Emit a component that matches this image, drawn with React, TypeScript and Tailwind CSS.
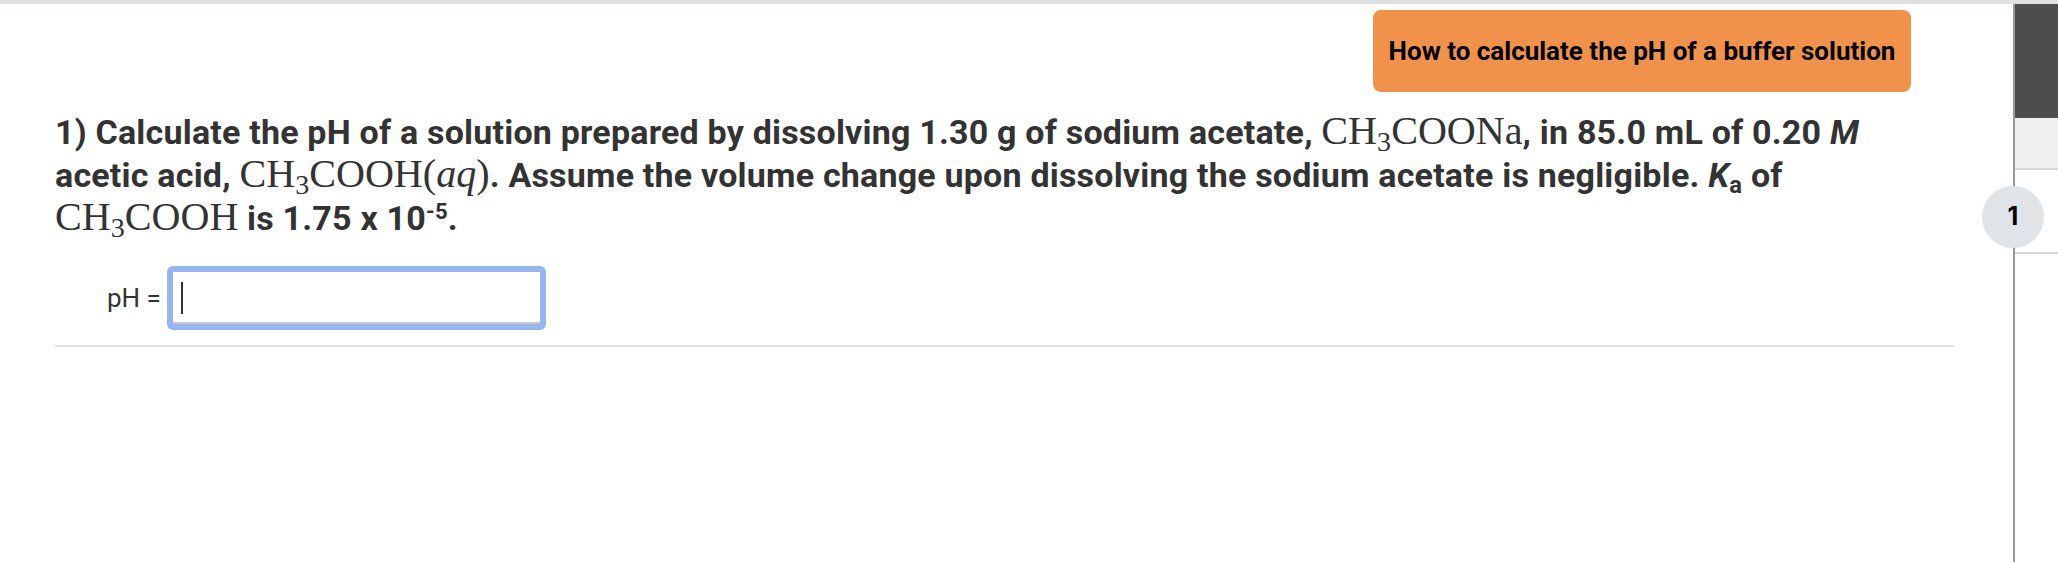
import React from "react";

const serif = "font-['Liberation_Serif','DejaVu_Serif',serif] font-normal text-[1.18em] tracking-normal";

function Chem({ children }: { children: React.ReactNode }) {
  return <span className={serif}>{children}</span>;
}

export default function App() {
  return (
    <div className="w-[2058px] h-[562px] bg-white overflow-hidden flex flex-col font-['Roboto',sans-serif]">
      <div className="h-[4px] bg-[#dfe1e0] shrink-0" />
      <div className="flex flex-1">
        {/* main question area */}
        <div className="flex-1 pl-[55px] pr-[59px]">
          <div className="flex justify-end pt-[6px] pr-[43px]">
            <button className="h-[82px] w-[538px] rounded-[8px] bg-[#f0924a] text-black font-bold text-[26px] whitespace-nowrap">
              How to calculate the pH of a buffer solution
            </button>
          </div>

          <p className="mt-[18px] max-w-[1840px] text-[34px] leading-[41px] tracking-[0.2px] font-bold text-[#333]">
            1) Calculate the pH of a solution prepared by dissolving 1.30 g of sodium acetate,{" "}
            <Chem>
              CH<sub className="text-[0.7em]">3</sub>COONa
            </Chem>
            , in 85.0 mL of 0.20 <i>M</i> acetic acid,{" "}
            <Chem>
              CH<sub className="text-[0.7em]">3</sub>COOH(<i>aq</i>)
            </Chem>
            . Assume the volume change upon dissolving the sodium acetate is negligible. <i>K</i>
            <sub className="text-[0.7em]">a</sub> of{" "}
            <Chem>
              CH<sub className="text-[0.7em]">3</sub>COOH
            </Chem>{" "}
            is 1.75 x 10<sup className="text-[0.65em]">-5</sup>.
          </p>

          <div className="flex items-center mt-[27px] pl-[52px]">
            <span className="text-[26px] text-[#333] mr-[6px] whitespace-nowrap">pH =</span>
            <div className="w-[379px] h-[64px] rounded-[6px] border-[6px] border-[#94b4f4] bg-white flex items-center pl-[8px] shadow-[inset_0_-2px_0_#c8c8c8]">
              <div className="w-[2px] h-[32px] bg-[#333]" />
            </div>
          </div>

          <div className="mt-[15px] h-[2px] bg-[#e2e2e2]" />
        </div>

        {/* right rail */}
        <div className="relative w-[45px] border-l-[2px] border-[#999] flex flex-col">
          <div className="h-[114px] bg-[#4d4d4d]" />
          <div className="h-[52px] bg-[#f0f0f0] border-b-[2px] border-[#d6d6d6]" />
          <div className="h-[84px] border-b-[2px] border-[#d6d6d6]" />
          <div className="absolute left-[-33px] top-[182px] w-[62px] h-[62px] rounded-full bg-[#e1e4e6] flex items-center justify-center text-[25px] font-bold text-black font-['Inter',sans-serif]">
            1
          </div>
        </div>
      </div>
    </div>
  );
}
